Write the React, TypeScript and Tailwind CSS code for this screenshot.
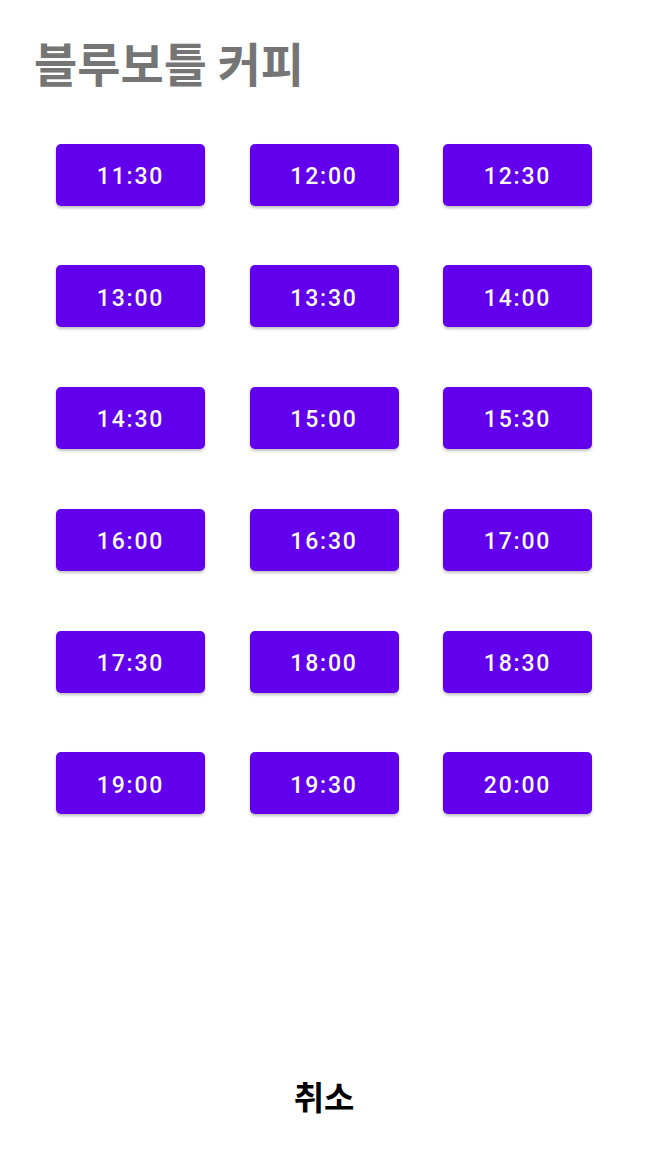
import React from "react";

const times = [
  "11:30", "12:00", "12:30",
  "13:00", "13:30", "14:00",
  "14:30", "15:00", "15:30",
  "16:00", "16:30", "17:00",
  "17:30", "18:00", "18:30",
  "19:00", "19:30", "20:00",
];

export default function App() {
  return (
    <div
      className="w-[648px] h-[1159px] bg-white flex flex-col"
      style={{ fontFamily: "Roboto, 'Noto Sans CJK KR', sans-serif" }}
    >
      <div className="pl-[34px] pt-[29px] h-[143.5px]">
        <h1
          className="text-[47px] leading-[66px] font-bold text-[#757575]"
          style={{ fontFamily: "'Noto Sans CJK KR', sans-serif" }}
        >
          블루보틀 커피
        </h1>
      </div>
      <div className="grid grid-cols-[149px_149px_149px] gap-x-[44.5px] gap-y-[59.8px] pl-[56px]">
        {times.map((t) => (
          <button
            key={t}
            className="h-[62px] pt-[5px] rounded-[5px] bg-[#6200EE] text-[#fafafa] text-[23px] font-medium tracking-[0.08em] shadow-[0_2px_3px_rgba(0,0,0,0.25)] flex items-center justify-center"
            style={{ fontFamily: "Roboto, sans-serif" }}
          >
            {t}
          </button>
        ))}
      </div>
      <div className="flex-1" />
      <div className="flex justify-center pb-[38px]">
        <span
          className="text-[33px] font-bold text-black"
          style={{ fontFamily: "'Noto Sans CJK KR', sans-serif" }}
        >
          취소
        </span>
      </div>
    </div>
  );
}
